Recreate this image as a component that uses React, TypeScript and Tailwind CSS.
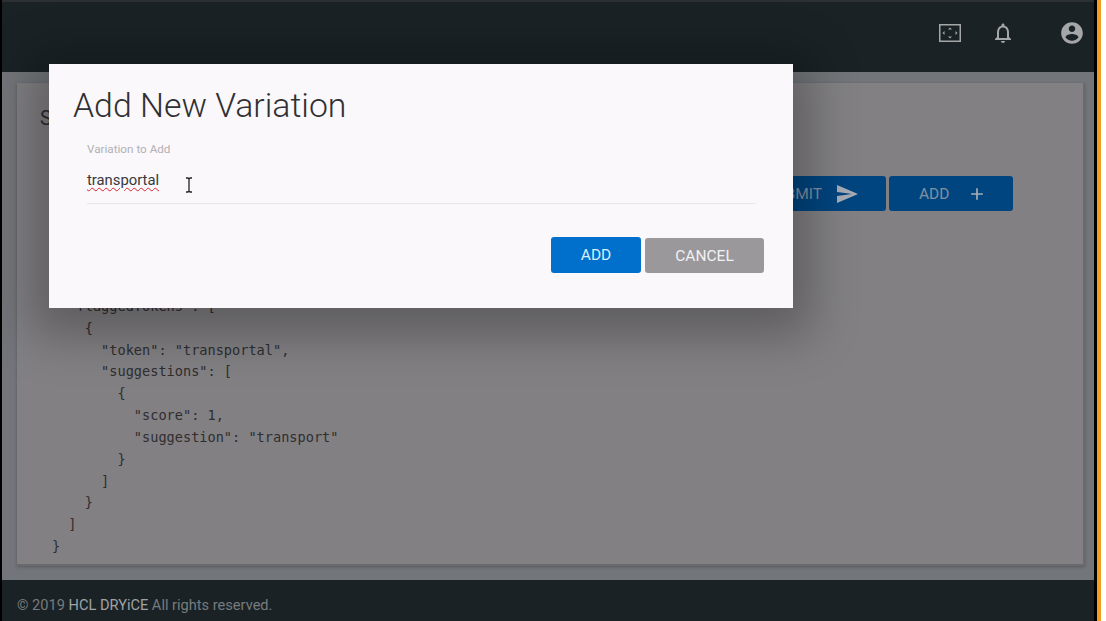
const code = `{
  "flaggedTokens": [
    {
      "token": "transportal",
      "suggestions": [
        {
          "score": 1,
          "suggestion": "transport"
        }
      ]
    }
  ]
}`;

function Bell() {
  return (
    <svg width="24" height="24" viewBox="0 0 24 24" fill="#a4a6a8">
      <path d="M12 22c1.1 0 2-.9 2-2h-4c0 1.1.9 2 2 2zm6-6v-5c0-3.07-1.63-5.64-4.5-6.32V4c0-.83-.67-1.5-1.5-1.5s-1.5.67-1.5 1.5v.68C7.64 5.36 6 7.92 6 11v5l-2 2v1h16v-1l-2-2zm-2 1H8v-6c0-2.48 1.51-4.5 4-4.5s4 2.02 4 4.5v6z" />
    </svg>
  );
}

function Account() {
  return (
    <svg width="26" height="26" viewBox="0 0 24 24" fill="#a4a6a8">
      <path d="M12 2C6.48 2 2 6.48 2 12s4.48 10 10 10 10-4.48 10-10S17.52 2 12 2zm0 3c1.66 0 3 1.34 3 3s-1.34 3-3 3-3-1.34-3-3 1.34-3 3-3zm0 14.2c-2.5 0-4.71-1.28-6-3.22.03-1.99 4-3.08 6-3.08 1.99 0 5.97 1.09 6 3.08-1.29 1.94-3.5 3.22-6 3.22z" />
    </svg>
  );
}

function Fullscreen() {
  return (
    <svg width="22" height="18" viewBox="0 0 22 18" fill="#a4a6a8">
      <path fillRule="evenodd" d="M0 0h22v18H0zM1.5 1.5v15h19v-15z" />
      <path d="M11 3.5l2 2H9zM11 14.5l-2-2h4zM3.5 9l2-2v4zM18.5 9l-2 2V7z" />
    </svg>
  );
}

export default function App() {
  return (
    <div className="relative flex h-[621px] w-[1106px] overflow-hidden bg-white font-['Roboto',sans-serif]">
      <div className="flex w-[1101px] border-r-4 border-[#f0a020] bg-black pl-[2px] pr-[3px]">
        <div className="flex min-w-0 flex-1 flex-col">
          <header className="flex h-[72px] items-center justify-end border-t-2 border-[#2c3033] bg-[#1a2226] pb-[9px] pr-[9px]">
            <div className="mr-[30px] flex"><Fullscreen /></div>
            <div className="mr-[44px] flex"><Bell /></div>
            <Account />
          </header>
          <main className="flex h-[508px] flex-col bg-[#72767a] pl-[15px] pr-[9px] pt-[11px]">
            <section className="flex h-[483px] flex-col border-b-2 border-r-2 border-[#6a6a6c] bg-[#828083] pl-[23px] pr-[70px] shadow-[0_1px_3px_rgba(0,0,0,0.25)]">
              <h2 className="mt-[21px] text-[20px] leading-[28px] text-[#2e2e30]">Spell Check</h2>
              <div className="mt-[44px] flex justify-end gap-[3px]">
                <button className="flex h-[35px] w-[124px] items-center justify-end gap-[13px] rounded-[3px] bg-[#00457f] pr-[27px] text-[15.5px] text-[#8290a2]">
                  <span className="pt-[2px]">SUBMIT</span>
                  <svg width="24" height="24" viewBox="0 0 24 24" fill="#a8adb5"><path d="M2.01 21L23 12 2.01 3 2 10l15 2-15 2z" /></svg>
                </button>
                <button className="flex h-[35px] w-[124px] items-center justify-start gap-[18px] rounded-[3px] bg-[#00457f] pl-[30px] text-[15.5px] text-[#8290a2]">
                  <span className="pt-[2px]">ADD</span>
                  <svg width="20" height="20" viewBox="0 0 24 24" fill="#a8adb5"><path d="M19 13h-6v6h-2v-6H5v-2h6V5h2v6h6v2z" /></svg>
                </button>
              </div>
              <pre className="ml-[12px] mt-[63px] font-['DejaVu_Sans_Mono',monospace] text-[13.6px] leading-[21.85px] text-[#2e2e30]">{code}</pre>
            </section>
          </main>
          <footer className="flex h-[41px] items-center bg-[#1a2226] pl-[15px] pt-[10px] text-[14.6px] text-[#777b7d]">
            <span>© 2019&nbsp;<span className="text-[#a0a3a5]">HCL DRYiCE</span>&nbsp;All rights reserved.</span>
          </footer>
        </div>
      </div>

      <div className="absolute left-[49px] top-[64px] flex h-[244px] w-[744px] flex-col bg-[#faf8fb] pl-[24px] pr-[29px] shadow-[0_10px_45px_18px_rgba(0,0,0,0.28)]">
        <h1 className="mt-[22px] text-[33.8px] font-light leading-[40px] text-[#303033]">Add New Variation</h1>
        <label className="ml-[14px] mt-[16px] text-[11.7px] leading-[14px] text-[#b2b0b4]">Variation to Add</label>
        <div className="relative ml-[14px] mr-[8px] mt-[14px] h-[34px] border-b border-[#e8e6e9] text-[14.8px] leading-[20px] text-[#38383b]">
          <span className="underline decoration-[#d9232e] decoration-wavy decoration-1 underline-offset-2">transportal</span>
          <svg className="absolute left-[97px] top-[7px]" width="10" height="16" viewBox="0 0 10 16" fill="none" stroke="#222" strokeWidth="1.3">
            <path d="M2 1h2l1 1 1-1h2M5 2v12M2 15h2l1-1 1 1h2" />
          </svg>
        </div>
        <div className="mt-[33px] flex justify-end gap-[4px]">
          <button className="h-[36px] w-[90px] rounded-[3px] bg-[#0070cc] pt-px text-[15.5px] text-[#d9eefc]">ADD</button>
          <button className="mt-px h-[35px] w-[119px] rounded-[3px] bg-[#9a989b] pt-[3px] text-[15.5px] text-[#f2f1f3]">CANCEL</button>
        </div>
      </div>
    </div>
  );
}
